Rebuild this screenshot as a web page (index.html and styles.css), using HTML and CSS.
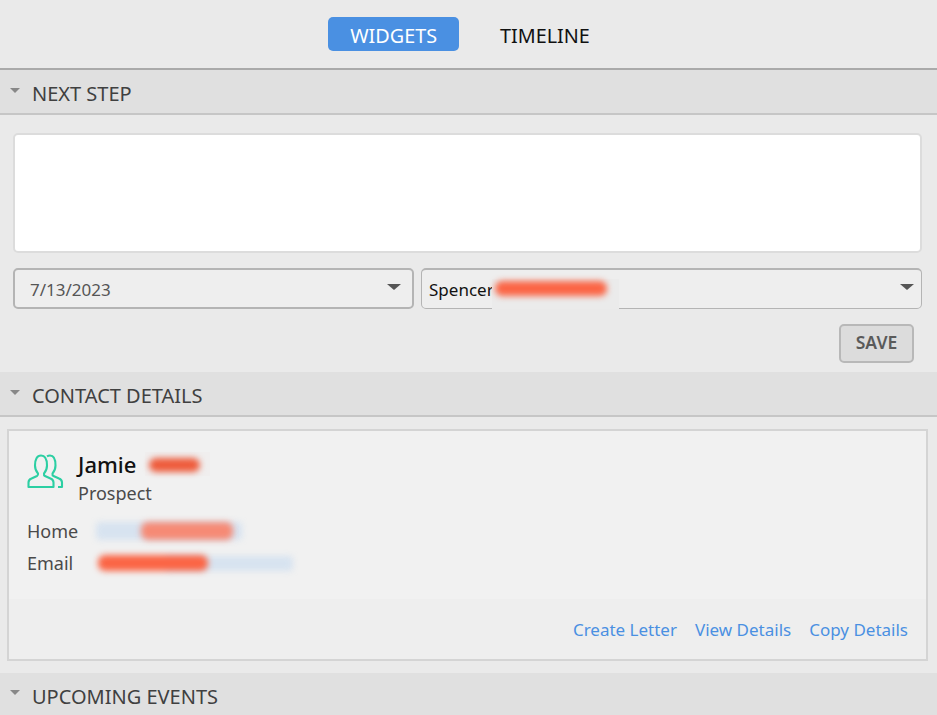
FILE: index.html
```html
<!DOCTYPE html>
<html lang="en">
<head>
<meta charset="utf-8">
<title>Widgets</title>
<link rel="stylesheet" href="styles.css">
</head>
<body>
<nav class="tabs">
  <a class="tab tab-active">WIDGETS</a>
  <a class="tab">TIMELINE</a>
</nav>
<section class="section section-next">
  <header class="section-head">
    <span class="caret"></span><h2>NEXT STEP</h2>
  </header>
  <div class="next-body">
    <div class="note"></div>
    <div class="selects">
      <div class="select select-date"><span>7/13/2023</span><i class="arrow"></i></div>
      <div class="select select-user">
        <span class="user-name">Spencer</span>
        <span class="patch patch-user"><b class="smear smear-user"></b></span>
        <i class="arrow"></i>
      </div>
    </div>
    <div class="save-row"><button class="save" type="button">SAVE</button></div>
  </div>
</section>
<section class="section">
  <header class="section-head head-contact">
    <span class="caret"></span><h2>CONTACT DETAILS</h2>
  </header>
  <div class="contact-body">
    <article class="card">
      <div class="card-main">
        <div class="person">
          <svg class="person-icon" viewBox="0 0 38 36" fill="none" stroke="#2ccfa3" stroke-width="2.100" stroke-linejoin="round" stroke-linecap="butt">
            <path d="M1.500 34v-4.500c0-2 1-3.200 3-4l5.500-2.500c1-.5 1.200-1.500 1-2.500-2-2.200-3-4.500-3-8C8 6.500 10 2.500 14 2.500s6 4 6 10c0 3.500-1 5.800-3 8-.2 1-.1 2 1 2.500l5.500 2.500c2 .8 3 2 3 4V34z"/>
            <path d="M20 3.300c1-.6 2-.8 3-.8 3.500 0 5.500 4 5.500 10 0 3.500-1 5.800-3 8-.2 1-.1 2 1 2.500l5.500 2.500c2 .8 3 2 3 4V34h-4"/>
          </svg>
          <div class="person-text">
            <div class="person-name"><span>Jamie</span><span class="patch patch-name"><b class="smear smear-name"></b></span></div>
            <div class="person-role">Prospect</div>
          </div>
        </div>
        <div class="info"><span class="info-label">Home</span><span class="patch patch-home"><b class="smear smear-home"></b></span></div>
        <div class="info"><span class="info-label">Email</span><span class="patch patch-email"><b class="smear smear-email"></b></span></div>
      </div>
      <footer class="card-links">
        <a>Create Letter</a>
        <a>View Details</a>
        <a>Copy Details</a>
      </footer>
    </article>
  </div>
</section>
<section class="section">
  <header class="section-head head-upcoming">
    <span class="caret"></span><h2>UPCOMING EVENTS</h2>
  </header>
</section>
</body>
</html>
```
FILE: styles.css
```css
* { box-sizing: border-box; }
html, body { margin: 0; height: 715px; overflow: hidden; }
body {
  background: #eaeaea;
  font-family: "Noto Sans", "Open Sans", sans-serif;
  color: #444;
}
.tabs {
  height: 70px;
  border-bottom: 2px solid #aaaaaa;
  display: flex;
  justify-content: center;
  align-items: flex-start;
  padding: 17px 0 0 3px;
  gap: 19px;
}
.tab {
  height: 34px;
  line-height: 37px;
  padding: 0 22px;
  font-size: 19.800px;
  color: #111;
  border-radius: 5px;
  font-weight: 400;
}
.tab-active { background: #4a90e2; color: #fff; }
.section-head {
  height: 45px;
  background: #e0e0e0;
  border-bottom: 2px solid #c6c6c6;
  display: flex;
  align-items: center;
  padding-left: 10px;
}
.section-head h2 {
  margin: 0;
  font-size: 20px;
  font-weight: 400;
  color: #404040;
  line-height: 48px;
  height: 43px;
}
.caret {
  width: 0; height: 0;
  border-left: 5.500px solid transparent;
  border-right: 5.500px solid transparent;
  border-top: 5.500px solid #888;
  margin-right: 12px;
  margin-top: -3px;
}
.next-body { padding: 18px 15px 9px 13px; height: 257px; }
.note {
  height: 120px;
  width: 909px;
  background: #fff;
  border: 2px solid #dcdcdc;
  border-radius: 5px;
}
.selects { display: flex; gap: 7px; margin-top: 15px; width: 909px; }
.select {
  height: 41px;
  background: #eeeeee;
  border: 2px solid #b4b4b4;
  border-radius: 5px;
  display: flex;
  align-items: center;
  position: relative;
  font-size: 17px;
}
.select-date { width: 401px; padding: 1px 0 0 15px; color: #555; }
.select-date .arrow { right: 11px; }
.select-user { width: 501px; padding-left: 7px; color: #111; border-width: 1.500px; border-top-width: 2px; }
.arrow {
  position: absolute;
  right: 7px;
  top: 14px;
  width: 0; height: 0;
  border-left: 7px solid transparent;
  border-right: 7px solid transparent;
  border-top: 6.500px solid #555;
}
.patch { display: inline-block; position: relative; }
.smear { position: absolute; display: block; border-radius: 7px; filter: blur(3px); }
.patch-user {
  width: 127px; height: 30px;
  background: #ebebeb;
  position: absolute;
  left: 70px;
  top: 9px;
}
.smear-user { left: 3px; top: 2px; width: 112px; height: 15px; background: #fb6545; }
.save-row { display: flex; justify-content: flex-end; margin-top: 15px; width: 901px; }
.save {
  width: 75px; height: 39px;
  background: #dcdcdc;
  border: 2px solid #b8b8b8;
  border-radius: 5px;
  font: 600 17.500px/31px "Noto Sans", sans-serif;
  color: #5a5a5a;
  padding: 0 0 2px;
}
.contact-body { padding: 12px 9px 12px 7px; }
.card {
  height: 232px;
  background: #f1f1f1;
  border: 2px solid #d4d4d4;
  display: flex;
  flex-direction: column;
}
.card-main { height: 168px; padding: 18px 0 0 18px; }
.person { display: flex; align-items: flex-start; }
.person-icon { width: 38px; height: 36px; margin-top: 4px; }
.person-text { margin-left: 13px; }
.person-name {
  font-size: 22px;
  font-weight: 500;
  color: #111;
  height: 32px;
  line-height: 30px;
  display: flex;
}
.patch-name { width: 65px; height: 24px; margin: 3px 0 0 9px; background: #f0eeee; }
.smear-name { left: 4px; top: 6px; width: 51px; height: 14px; background: #ee5c3c; }
.person-role { font-size: 18px; line-height: 24px; color: #4a4a4a; height: 24px; }
.info { display: flex; align-items: center; height: 32px; font-size: 18px; color: #4a4a4a; }
.person + .info { margin-top: 10px; }
.info-label { width: 68px; }
.patch-home { width: 150px; height: 24px; }
.patch-home::before, .patch-email::before {
  content: "";
  position: absolute;
  background: #d7e3f0;
  filter: blur(3px);
  border-radius: 4px;
}
.patch-home::before { left: 1px; top: 3px; width: 146px; height: 18px; }
.smear-home { left: 46px; top: 3px; width: 92px; height: 18px; background: #f68a75; }
.patch-email { width: 210px; height: 24px; }
.patch-email::before { left: 70px; top: 5px; width: 128px; height: 15px; }
.smear-email { left: 3px; top: 4px; width: 110px; height: 16px; background: #fb6545; }
.card-links {
  flex: 1;
  background: #eeeeee;
  display: flex;
  justify-content: flex-end;
  align-items: center;
  gap: 18px;
  padding-right: 18px;
  font-size: 17px;
  color: #4a90e2;
}
.head-upcoming { height: 42px; border-bottom: 0; }
.head-upcoming h2 { height: 42px; }
```
